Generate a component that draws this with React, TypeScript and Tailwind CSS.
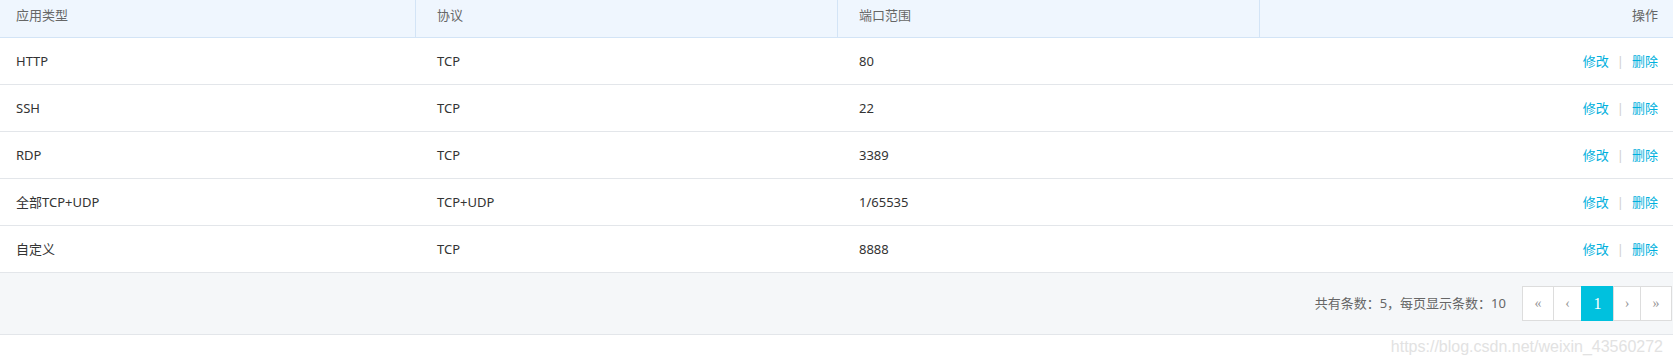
const rows = [
  { app: 'HTTP', proto: 'TCP', port: '80' },
  { app: 'SSH', proto: 'TCP', port: '22' },
  { app: 'RDP', proto: 'TCP', port: '3389' },
  { app: '全部TCP+UDP', proto: 'TCP+UDP', port: '1/65535' },
  { app: '自定义', proto: 'TCP', port: '8888' },
];

const font = { fontFamily: '"Noto Sans", "Noto Sans CJK SC", sans-serif' };

const App = () => {
  return (
    <div
      className="w-[1673px] h-[364px] bg-white text-[13px] text-[#333]"
      style={font}
    >
      {/* Header */}
      <div className="grid grid-cols-[415px_422px_422px_1fr] h-[38px] bg-[#eff6fe] border-b border-[#d3e4f6] text-[#666]">
        <div className="flex items-center pl-4 pb-[5px]">应用类型</div>
        <div className="flex items-center pl-[21px] pb-[5px] border-l border-[#d3e4f6]">协议</div>
        <div className="flex items-center pl-[21px] pb-[5px] border-l border-[#d3e4f6]">端口范围</div>
        <div className="flex items-center justify-end pr-[15px] pb-[5px] border-l border-[#d3e4f6]">操作</div>
      </div>

      {/* Rows */}
      {rows.map(row => (
        <div
          key={row.app}
          className="grid grid-cols-[415px_422px_422px_1fr] h-[47px] pt-[2px] border-b border-[#e3e6ea]"
        >
          <div className="flex items-center pl-4">{row.app}</div>
          <div className="flex items-center pl-[22px]">{row.proto}</div>
          <div className="flex items-center pl-[22px]">{row.port}</div>
          <div className="flex items-center justify-end pr-[15px] text-[#00b0dd]">
            <a className="cursor-pointer">修改</a>
            <span className="mx-[8px] text-[#d0d0d0]">|</span>
            <a className="cursor-pointer">删除</a>
          </div>
        </div>
      ))}

      {/* Footer */}
      <div className="flex items-center justify-end h-[62px] bg-[#f5f7f9] border-b border-[#e3e6ea] pr-px">
        <span className="mr-4 text-[#666] text-[13px]">
          共有条数：5，每页显示条数：10
        </span>
        <div
          className="flex h-[35px] text-[#999]"
          style={{ fontFamily: '"Liberation Serif", serif' }}
        >
          <button className="w-[32px] border border-[#ddd] bg-white text-[14px]">«</button>
          <button className="-ml-px w-[29px] border border-[#ddd] bg-white text-[14px]">‹</button>
          <button className="-ml-px w-[33px] border border-[#00c1de] bg-[#00c1de] text-white text-[16px]">1</button>
          <button className="-ml-px w-[28px] border border-[#ddd] bg-white text-[14px]">›</button>
          <button className="-ml-px w-[32px] border border-[#ddd] bg-white text-[14px]">»</button>
        </div>
      </div>

      <div
        className="flex justify-end pr-[10px] text-[16px] text-[#e2e2e2]"
        style={{ fontFamily: '"Liberation Sans", sans-serif' }}
      >
        https://blog.csdn.net/weixin_43560272
      </div>
    </div>
  );
};

export default App;
